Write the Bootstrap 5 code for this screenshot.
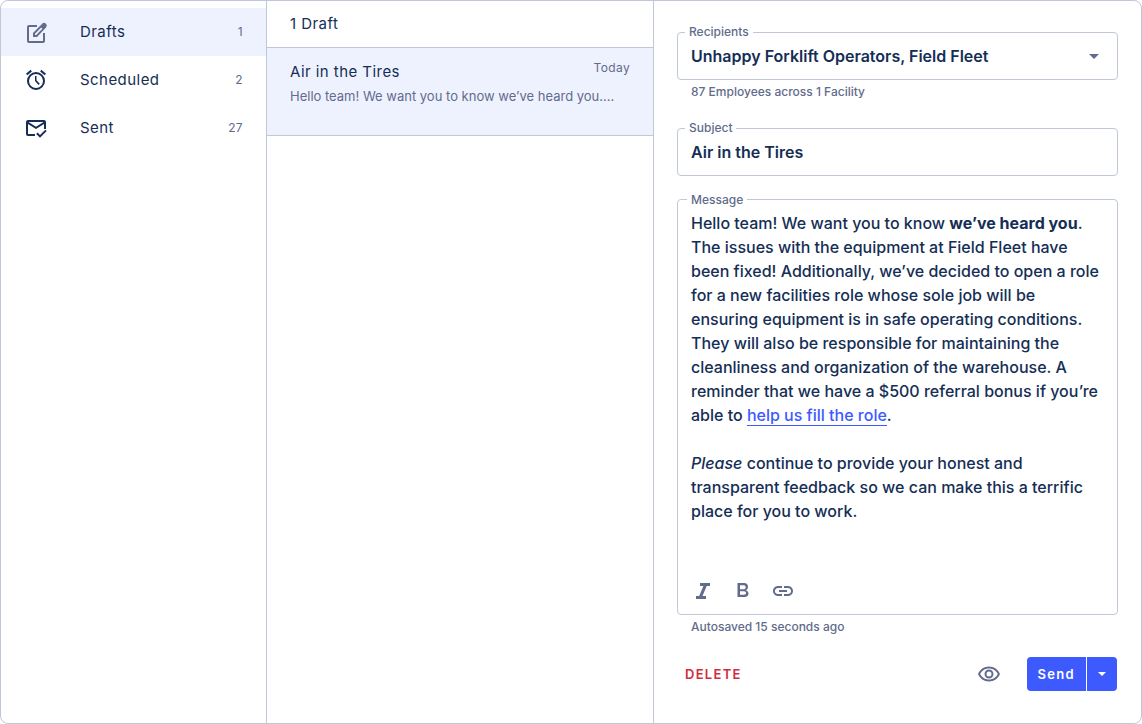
<!DOCTYPE html>
<html lang="en">
<head>
<meta charset="utf-8">
<meta name="viewport" content="width=device-width, initial-scale=1">
<title>Drafts</title>
<link href="https://cdn.jsdelivr.net/npm/bootstrap@5.3.0/dist/css/bootstrap.min.css" rel="stylesheet">
<style>
  :root {
    --ink: #152e55;
    --slate: #626b8c;
    --tint: #eef2ff;
    --brand: #3d5aff;
    --bs-body-font-family: Inter, "Liberation Sans", sans-serif;
    --bs-body-color: #152e55;
    --bs-border-color: #c0c8d8;
  }
  .mailbox { border-radius: 8px; }
  .folders { flex: 0 0 266px; padding-top: 7px; }
  .drafts { flex: 0 0 387px; }
  .composer { padding: 31px 23px 32px; }
  svg { display: block; fill: currentColor; }

  .folder-link { height: 48px; padding: 0 23px; gap: 32px; color: var(--ink); line-height: 24px; }
  .folder-link.active { background: var(--tint); }
  .folder-link.active svg, .count { color: var(--slate); }
  .tracked { font-size: 15px; letter-spacing: .03em; }
  .count, .draft-item time { font-size: 12px; letter-spacing: .03em; }

  .list-heading { height: 47px; padding: 0 23px; font-weight: 400; }
  .draft-item { height: 88px; padding: 12px 23px; background: var(--tint); color: var(--ink); line-height: 24px; }
  .draft-item time { line-height: 16px; color: var(--slate); }
  .draft-item p { font-size: 13px; line-height: 24px; color: var(--slate); }

  .outlined { border-radius: 4px; }
  .outlined > label, .outlined > .field-label {
    position: absolute; top: -9px; left: 7px; padding: 0 4px;
    background: #fff; color: var(--slate);
    font-size: 12px; line-height: 16px; font-weight: 500;
  }
  .outlined > .field-label { top: -8px; left: 9px; }
  .outlined .field-input {
    width: 100%; height: 46px; padding: 0 13px; border: 0; border-radius: 4px;
    background: transparent; color: var(--ink); font-weight: 600; appearance: none;
  }
  .outlined .caret { position: absolute; right: 18px; top: 21px; color: var(--slate); pointer-events: none; }
  .hint { padding-left: 14px; font-size: 12px; line-height: 24px; font-weight: 500; color: var(--slate); }
  .message-box { margin-top: 23px; }
  .message-body { padding: 11px 15px 0 13px; line-height: 24px; font-weight: 500; outline: 0; }
  .message-body p { margin-bottom: 24px; }
  .message-body a { color: var(--brand); text-decoration: none; border-bottom: 1px solid var(--brand); }
  .tool { width: 24px; height: 24px; padding: 0; border: 0; background: none; color: var(--slate); }
  .tools { padding: 0 13px 11px; gap: 16px; }
  .actions { margin-top: 18px; padding-right: 1px; }
  .btn-delete { padding: 0 8px; border: 0; font-size: 13px; font-weight: 600; line-height: 34px; letter-spacing: .1em; color: #d22d3c; }
  .btn-send { --bs-btn-bg: #3d5aff; --bs-btn-color: #fff; --bs-btn-hover-bg: #2f4be6; --bs-btn-hover-color: #fff;
    height: 34px; padding: 0 11px; border: 0; border-radius: 4px; font-size: 13px; line-height: 34px; font-weight: 600; letter-spacing: .1em; }
  .preview { margin-right: 26px; }
  .send-group { gap: 1px; }
</style>
</head>
<body>
<main class="mailbox d-flex border min-vh-100">
  <nav class="folders border-end" aria-label="Folders">
    <a class="folder-link active d-flex align-items-center text-decoration-none" href="#drafts" aria-current="page">
      <svg width="24" height="24" viewBox="0 0 24 24"><path d="M5 5H13V7H5V21H19V13H21V21Q21 23 19 23H5Q3 23 3 21V7Q3 5 5 5Z"/><path fill-rule="evenodd" d="M9 13L18.200 3.700Q20 2 22 3.800Q23.700 5.700 22 7.400L13 17H9ZM11 13.800V15H12.200L18.400 8.700L17.200 7.500Z"/></svg>
      <span class="tracked flex-grow-1">Drafts</span><span class="count">1</span>
    </a>
    <a class="folder-link d-flex align-items-center text-decoration-none" href="#scheduled">
      <svg width="24" height="24" viewBox="0 0 24 24"><path d="M12 20a7 7 0 0 1-7-7 7 7 0 0 1 7-7 7 7 0 0 1 7 7 7 7 0 0 1-7 7m0-16a9 9 0 0 0-9 9 9 9 0 0 0 9 9 9 9 0 0 0 9-9 9 9 0 0 0-9-9m.5 4H11v5l3.600 4 1.200-1.200-3.300-3.600zM7.88 3.39 6.6 1.86 2 5.71l1.29 1.53zM22 5.72l-4.6-3.86-1.29 1.53 4.6 3.86z"/></svg>
      <span class="tracked flex-grow-1">Scheduled</span><span class="count">2</span>
    </a>
    <a class="folder-link d-flex align-items-center text-decoration-none" href="#sent">
      <svg width="24" height="24" viewBox="0 0 24 24"><path d="M4 4H20Q22 4 22 6V13H20V8L12 13L4 8V18H11V20H4Q2 20 2 18V6Q2 4 4 4ZM4.5 6L12 10.7L19.5 6Z"/><path d="M16 21.8L12.2 18L13.6 16.6L16 19L21.3 13.7L22.7 15.1Z"/></svg>
      <span class="tracked flex-grow-1">Sent</span><span class="count">27</span>
    </a>
  </nav>

  <section class="drafts border-end" aria-label="Drafts">
    <h1 class="list-heading tracked d-flex align-items-center m-0 border-bottom">1 Draft</h1>
    <a class="draft-item d-block border-bottom text-decoration-none" href="#air-in-the-tires">
      <div class="d-flex justify-content-between">
        <span class="tracked">Air in the Tires</span>
        <time>Today</time>
      </div>
      <p class="m-0 text-nowrap">Hello team! We want you to know we’ve heard you....</p>
    </a>
  </section>

  <form class="composer d-flex flex-column flex-grow-1">
    <div class="outlined border position-relative">
      <label for="recipients">Recipients</label>
      <select class="field-input" id="recipients"><option>Unhappy Forklift Operators, Field Fleet</option></select>
      <svg class="caret" width="10" height="5" viewBox="0 0 10 5"><path d="M0 0H10L5 5Z"/></svg>
    </div>
    <div class="hint">87 Employees across 1 Facility</div>

    <div class="outlined border position-relative mt-4">
      <label for="subject">Subject</label>
      <input class="field-input" id="subject" type="text" value="Air in the Tires">
    </div>

    <div class="outlined message-box border position-relative d-flex flex-column flex-grow-1">
      <span class="field-label" id="message-label">Message</span>
      <div class="message-body flex-grow-1" contenteditable="true" role="textbox" aria-multiline="true" aria-labelledby="message-label" spellcheck="false">
        <p>Hello team! We want you to know <strong>we’ve heard you</strong>. The issues with the equipment at Field Fleet have been fixed! Additionally, we’ve decided to open a role for a new facilities role whose sole job will be ensuring equipment is in safe operating conditions. They will also be responsible for maintaining the cleanliness and organization of the warehouse. A reminder that we have a $500 referral bonus if you’re able to <a href="#role">help us fill the role</a>.</p>
        <p><em>Please</em> continue to provide your honest and transparent feedback so we can make this a terrific place for you to work.</p>
      </div>
      <div class="tools d-flex">
        <button class="tool" type="button" aria-label="Italic"><svg width="24" height="24" viewBox="0 0 24 24"><path d="M9 4H19V7H15.7L11.5 17H15V20H5V17H8.2L12.4 7H9Z"/></svg></button>
        <button class="tool" type="button" aria-label="Bold"><svg width="24" height="24" viewBox="0 0 24 24"><path fill-rule="evenodd" d="M6.500 4H13Q17 4 17 8Q17 10.500 15 11.200Q17.500 12 17.500 14.200Q17.500 18 13.500 18H6.500ZM9 6.200V10.200H12.800Q14.700 10.200 14.700 8.200Q14.700 6.200 12.800 6.200ZM9 12.200V15.800H13Q15.100 15.800 15.100 14Q15.100 12.200 13 12.200Z"/></svg></button>
        <button class="tool" type="button" aria-label="Link"><svg width="24" height="24" viewBox="0 0 24 24"><path d="M3.9 12c0-1.71 1.39-3.1 3.1-3.1h4V7H7c-2.76 0-5 2.24-5 5s2.24 5 5 5h4v-1.9H7c-1.71 0-3.1-1.39-3.1-3.1M8 13h8v-2H8zm9-6h-4v1.9h4c1.71 0 3.1 1.39 3.1 3.1s-1.39 3.1-3.1 3.1h-4V17h4c2.76 0 5-2.24 5-5s-2.24-5-5-5"/></svg></button>
      </div>
    </div>
    <div class="hint">Autosaved 15 seconds ago</div>

    <div class="actions d-flex align-items-center">
      <button class="btn btn-delete me-auto" type="button">DELETE</button>
      <button class="tool preview" type="button" aria-label="Preview"><svg width="24" height="24" viewBox="0 0 24 24"><path d="M12 6.5c3.8 0 7.2 2.1 8.8 5.5-1.6 3.4-5 5.5-8.8 5.5S4.800 15.400 3.200 12C4.800 8.600 8.200 6.500 12 6.500m0-2C7 4.500 2.700 7.600 1 12c1.700 4.400 6 7.500 11 7.500s9.300-3.100 11-7.500c-1.700-4.400-6-7.500-11-7.500m0 5a2.500 2.500 0 0 1 0 5 2.500 2.500 0 0 1 0-5m0-2c-2.500 0-4.500 2-4.500 4.500s2 4.500 4.500 4.500 4.500-2 4.500-4.500-2-4.500-4.500-4.500"/></svg></button>
      <div class="send-group d-flex" role="group" aria-label="Send">
        <button class="btn btn-send rounded-end-0" type="submit">Send</button>
        <button class="btn btn-send rounded-start-0 d-flex align-items-center" type="button" aria-label="More send options"><svg width="8" height="4" viewBox="0 0 8 4"><path d="M0 0H8L4 4Z"/></svg></button>
      </div>
    </div>
  </form>
</main>
<script src="https://cdn.jsdelivr.net/npm/bootstrap@5.3.0/dist/js/bootstrap.bundle.min.js"></script>
</body>
</html>
